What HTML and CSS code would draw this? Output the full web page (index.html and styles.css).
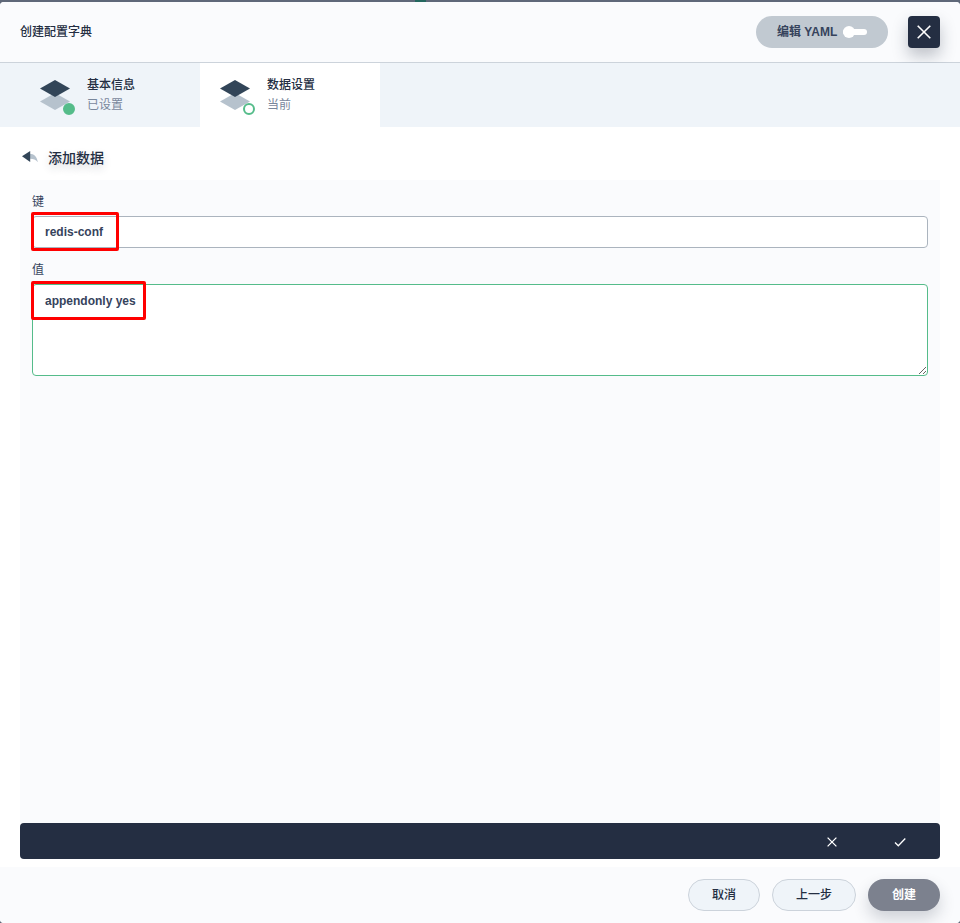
FILE: index.html
```html
<!DOCTYPE html>
<html lang="zh-CN">
<head>
<meta charset="utf-8">
<title>创建配置字典</title>
<link rel="stylesheet" href="styles.css">
</head>
<body>
<div class="backdrop-mark"></div>
<div class="modal">
  <header class="header">
    <h1 class="title">创建配置字典</h1>
    <div class="yaml"><span>编辑 YAML</span><i class="toggle"></i></div>
    <button class="close" aria-label="关闭"><svg width="16" height="16" viewBox="0 0 16 16"><path d="M1.7 1.7l12.6 12.6M14.3 1.7L1.7 14.3" stroke="#fff" stroke-width="1.6"/></svg></button>
  </header>
  <nav class="tabs">
    <div class="tab first">
      <div class="tab-icon"><svg width="40" height="40" viewBox="0 0 40 40"><path d="M5 25.5L20 17l15 8.5L20 34z" fill="#b6c2cd"/><path d="M5 12.5L20 4l15 8.5L20 21z" fill="#324558"/></svg><i class="dot done"></i></div>
      <div><div class="tab-name">基本信息</div><div class="tab-state">已设置</div></div>
    </div>
    <div class="tab active">
      <div class="tab-icon"><svg width="40" height="40" viewBox="0 0 40 40"><path d="M5 25.5L20 17l15 8.5L20 34z" fill="#b6c2cd"/><path d="M5 12.5L20 4l15 8.5L20 21z" fill="#324558"/></svg><i class="dot"></i></div>
      <div><div class="tab-name">数据设置</div><div class="tab-state">当前</div></div>
    </div>
  </nav>
  <main class="body">
    <div class="subhead">
      <svg width="20" height="20" viewBox="0 0 20 20"><path d="M9 6.7C14 6.5 17.200 9.500 17.800 15.300C15.500 12.600 13 11.700 9 11.900z" fill="#b6c2cd"/><path d="M2 9.300L10.200 4v11z" fill="#324558"/></svg>
      <h2>添加数据</h2>
    </div>
    <section class="panel">
      <label>键</label>
      <div class="field"><input type="text" value="redis-conf"><i class="mark mark-key"></i></div>
      <label>值</label>
      <div class="field"><textarea>appendonly yes</textarea><i class="mark mark-value"></i></div>
    </section>
    <div class="actions">
      <svg width="20" height="20" viewBox="0 0 20 20"><path d="M5.6 5.6l8.8 8.8M14.4 5.6l-8.8 8.8" stroke="#fff" stroke-width="1.3"/></svg>
      <svg width="20" height="20" viewBox="0 0 20 20"><path d="M5 10.5l3.300 3.300L15.300 6.500" fill="none" stroke="#fff" stroke-width="1.3"/></svg>
    </div>
  </main>
  <footer class="footer">
    <button class="btn">取消</button>
    <button class="btn wide">上一步</button>
    <button class="btn primary">创建</button>
  </footer>
</div>
</body>
</html>
```
FILE: styles.css
```css
* { box-sizing: border-box; }
body {
  margin: 0;
  height: 923px;
  padding-top: 2px;
  overflow: hidden;
  background: #5f6879;
  color: #242e42;
  font: 12px/20px "Liberation Sans", "Noto Sans CJK SC", sans-serif;
}
h1, h2 { margin: 0; }
button { font: inherit; color: inherit; padding: 0; }
svg { display: block; }
.backdrop-mark {
  position: absolute;
  top: 0;
  left: 415px;
  width: 11px;
  height: 2px;
  background: #24675f;
}
.modal {
  position: relative;
  display: flex;
  flex-direction: column;
  height: 921px;
  border-radius: 4px;
  overflow: hidden;
  background: #fff;
}
.header {
  display: flex;
  align-items: center;
  height: 61px;
  padding: 0 20px;
  border-bottom: 1px solid #ccd3db;
  background: #fafbfd;
}
.title { flex: 1; font-size: 12px; font-weight: 500; }
.yaml {
  display: flex;
  align-items: center;
  width: 132px;
  height: 32px;
  margin-right: 20px;
  padding-left: 21px;
  border-radius: 16px;
  background: #c1c9d1;
  color: #36435c;
  font-weight: 600;
}
.toggle {
  position: relative;
  width: 24px;
  height: 6px;
  margin-left: 6px;
  border-radius: 3px;
  background: #fff;
}
.toggle::before {
  content: "";
  position: absolute;
  left: 0;
  top: -3px;
  width: 12px;
  height: 12px;
  border-radius: 50%;
  background: #fff;
}
.close {
  display: flex;
  align-items: center;
  justify-content: center;
  width: 32px;
  height: 32px;
  border: 0;
  border-radius: 4px;
  background: #242e42;
  box-shadow: 0 8px 16px rgba(36, 46, 66, .28);
}
.tabs { display: flex; height: 64px; background: #eff4f9; }
.tab { display: flex; width: 180px; padding: 12px 0 0 15px; }
.first { width: 200px; padding-left: 35px; }
.active { background: #fff; }
.tab-icon { position: relative; width: 40px; height: 40px; margin: 1px 12px 0 0; }
.dot {
  position: absolute;
  left: 28px;
  top: 27px;
  width: 12px;
  height: 12px;
  border: 2px solid #55bc8a;
  border-radius: 50%;
  background: #fff;
}
.done { background: #55bc8a; }
.tab-name { font-weight: 500; }
.tab-state { color: #79879c; }
.body { flex: 1; display: flex; flex-direction: column; padding: 20px 20px 8px; }
.subhead { display: flex; gap: 8px; height: 33px; }
.subhead h2 { padding-top: 1px; font-size: 14px; font-weight: 500; text-shadow: 0 4px 8px rgba(36, 46, 66, .2); }
.panel { flex: 1; padding: 12px; background: #fafbfd; }
.panel label { display: block; margin-bottom: 4px; color: #36435c; }
.field { position: relative; height: 32px; margin-bottom: 12px; }
input, textarea {
  display: block;
  width: 896px;
  height: 32px;
  margin: 0;
  padding: 5px 12px;
  border: 1px solid #abb4be;
  border-radius: 4px;
  outline: 0;
  background: #fff;
  color: #36435c;
  font: 600 12px/20px "Liberation Sans", "Noto Sans CJK SC", sans-serif;
}
textarea { height: 92px; padding-top: 6px; border-color: #55bc8a; }
.mark {
  position: absolute;
  left: -1px;
  border: 3px solid #f00;
  border-radius: 2px;
}
.mark-key { top: -4px; width: 88px; height: 39px; }
.mark-value { top: -3px; width: 115px; height: 39px; }
.actions {
  display: flex;
  align-items: center;
  justify-content: flex-end;
  gap: 48px;
  height: 36px;
  padding: 2px 30px 0 0;
  border-radius: 4px;
  background: #242e42;
}
.footer {
  display: flex;
  align-items: center;
  justify-content: flex-end;
  gap: 12px;
  height: 56px;
  padding: 0 20px;
  background: #fafbfd;
}
.btn {
  width: 72px;
  height: 32px;
  border: 1px solid #ccd3db;
  border-radius: 16px;
  background: #eff4f9;
  font-weight: 500;
}
.wide { width: 84px; }
.primary {
  border: 0;
  background: #7c818e;
  color: #fff;
  font-weight: 700;
  box-shadow: 0 8px 16px rgba(36, 46, 66, .2);
}
```
